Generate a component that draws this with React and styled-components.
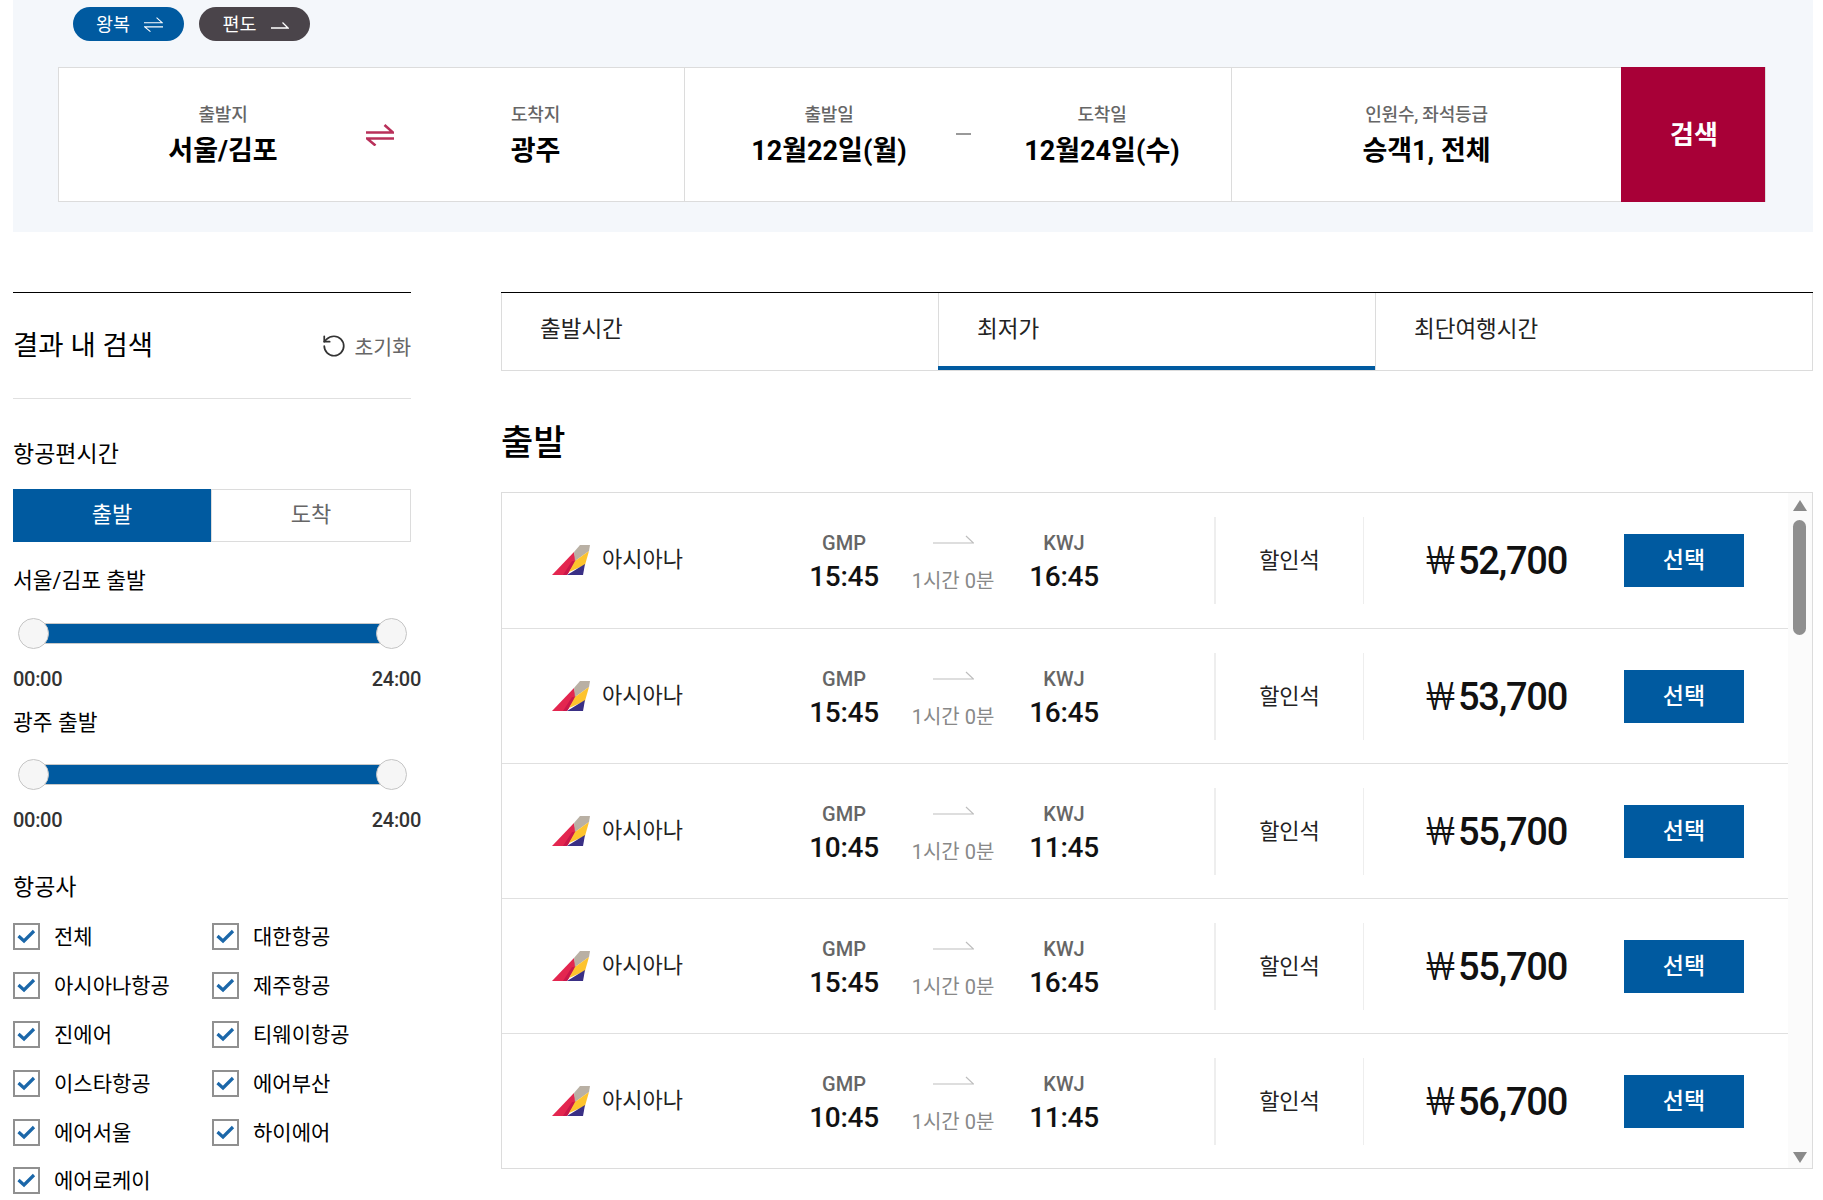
import React from "react";
import styled, { createGlobalStyle } from "styled-components";
import { RotateCcw } from "lucide-react";

const Global = createGlobalStyle`
  * { box-sizing: border-box; }
  html, body { margin: 0; padding: 0; background: #fff; }
  body { font-family: Roboto, "Noto Sans CJK KR", sans-serif; color: #000; overflow: hidden; }
`;

const BLUE = "#005aa0";

const Page = styled.div`
  width: 1823px;
  height: 1200px;
  padding: 0 10px 0 13px;
  overflow: hidden;
`;
const Hero = styled.section`
  height: 232px;
  background: #f4f7fb;
  padding: 7px 47px 0 45px;
`;
const Pills = styled.div`
  display: flex;
  gap: 15px;
  padding-left: 15px;
`;
const Pill = styled.button`
  width: 111px;
  height: 34px;
  border: 0;
  border-radius: 17px;
  background: ${(p) => (p.$dark ? "#4a444a" : BLUE)};
  color: #fff;
  font: 400 18.5px Roboto, "Noto Sans CJK KR", sans-serif;
  display: flex;
  align-items: center;
  justify-content: center;
  gap: 14px;
  padding: 0 0 2px 2px;
  & > svg { margin-top: 3px; }
`;
const SearchBox = styled.div`
  margin-top: 26px;
  height: 135px;
  display: flex;
  background: #fff;
  border: 1px solid #dcdcdc;
`;
const Group = styled.div`
  width: ${(p) => p.$w}px;
  flex: none;
  display: flex;
  align-items: center;
  border-right: ${(p) => (p.$last ? "0" : "1px solid #dcdcdc")};
`;
const Field = styled.div`
  width: ${(p) => p.$w}px;
  flex: none;
  text-align: center;
  padding-top: 3px;
`;
const FieldLabel = styled.div`
  font-size: 18px;
  font-weight: 500;
  color: #666;
  line-height: 24px;
  letter-spacing: -0.2px;
`;
const FieldValue = styled.div`
  font-size: 27px;
  font-weight: 700;
  line-height: 36px;
  margin-top: 6px;
  white-space: nowrap;
`;
const Floating = styled.div`
  width: 0;
  flex: none;
  display: flex;
  justify-content: center;
  transform: translateX(${(p) => p.$shift}px);
  & > * { flex: none; }
`;
const Dash = styled.div`
  width: 15px;
  height: 2px;
  background: #999;
  margin-top: -2px;
`;
const SearchButton = styled.button`
  width: 144px;
  flex: none;
  margin: -1px 0 -1px auto;
  border: 0;
  background: #a80037;
  color: #fff;
  font: 700 26px Roboto, "Noto Sans CJK KR", sans-serif;
  padding: 0 0 4px 2px;
`;
const Content = styled.div`
  display: flex;
  gap: 90px;
  margin-top: 60px;
`;
const Sidebar = styled.aside`
  width: 398px;
  flex: none;
  border-top: 1px solid #000;
`;
const SideHead = styled.div`
  height: 106px;
  display: flex;
  align-items: center;
  justify-content: space-between;
  border-bottom: 1px solid #e0e0e0;
  padding-top: 3px;
`;
const SideTitle = styled.h2`
  margin: -3px 0 0;
  font-size: 27.5px;
  font-weight: 400;
  line-height: 40px;
`;
const Reset = styled.div`
  display: flex;
  align-items: center;
  gap: 7px;
  font-size: 20.5px;
  color: #666;
  margin-top: -2px;
`;
const Section = styled.h3`
  margin: ${(p) => p.$mt}px 0 0;
  font-size: 23px;
  font-weight: 400;
  line-height: 32px;
`;
const Segment = styled.div`
  display: flex;
  margin-top: 18px;
  height: 53px;
`;
const SegItem = styled.div`
  flex: 1;
  display: flex;
  align-items: center;
  justify-content: center;
  font-size: 22px;
  padding-bottom: 7px;
  background: ${(p) => (p.$on ? BLUE : "#fff")};
  color: ${(p) => (p.$on ? "#fff" : "#666")};
  border: ${(p) => (p.$on ? "0" : "1px solid #dcdcdc")};
`;
const SubLabel = styled.div`
  font-size: 21.5px;
  line-height: 30px;
  margin-top: ${(p) => p.$mt}px;
`;
const Rail = styled.div`
  position: relative;
  height: 31px;
  width: 389px;
  margin: ${(p) => p.$mt}px 0 0 5px;
  display: flex;
  align-items: center;
  padding: 0 15px;
`;
const Fill = styled.div`
  flex: 1;
  height: 21px;
  background: ${BLUE};
  border-top: 1px solid #c8c8c8;
  border-bottom: 1px solid #c8c8c8;
`;
const Knob = styled.span`
  position: absolute;
  top: 0;
  ${(p) => (p.$end ? "right: 0;" : "left: 0;")}
  width: 31px;
  height: 31px;
  border-radius: 50%;
  background: #f6f6f6;
  border: 1px solid #c5c5c5;
`;
const Range = styled.div`
  display: flex;
  justify-content: space-between;
  width: 408px;
  margin-top: 16px;
  font-size: 20px;
  font-weight: 500;
  line-height: 28px;
  color: #333;
  letter-spacing: -0.3px;
`;
const Checks = styled.div`
  display: grid;
  grid-template-columns: 199px 199px;
  grid-auto-rows: 48.8px;
  margin-top: 19.4px;
`;
const Check = styled.label`
  display: flex;
  align-items: flex-start;
  gap: 14px;
  font-size: 21px;
  line-height: 28px;
  white-space: nowrap;
`;
const Box = styled.span`
  width: 27px;
  height: 27px;
  flex: none;
  border: 2px solid #909090;
  background: #fff;
  display: flex;
  align-items: center;
  justify-content: center;
`;
const Main = styled.main`
  flex: 1;
  min-width: 0;
  border-top: 1px solid #000;
`;
const Tabs = styled.div`
  display: flex;
  height: 78px;
  border: 1px solid #dcdcdc;
  border-top: 0;
`;
const Tab = styled.div`
  flex: 1;
  position: relative;
  padding: 20px 0 0 38px;
  font-size: 22.5px;
  line-height: 32px;
  color: #222;
  border-left: ${(p) => (p.$first ? "0" : "1px solid #dcdcdc")};
  ${(p) => p.$on && `&::after { content: ""; position: absolute; left: -1px; right: 0; bottom: 0; height: 4px; background: ${BLUE}; }`}
`;
const Heading = styled.h2`
  margin: 49px 0 0;
  font-size: 35px;
  font-weight: 500;
  line-height: 48px;
`;
const List = styled.div`
  position: relative;
  margin-top: 24px;
  height: 677px;
  border: 1px solid #dcdcdc;
  padding-right: 24px;
  overflow: hidden;
`;
const Row = styled.div`
  height: ${(p) => (p.$first ? 136 : 135)}px;
  padding-bottom: ${(p) => (p.$first ? 1 : 0)}px;
  display: grid;
  grid-template-columns: 218px 148px 70px 152px 74px 150px 260px 120px;
  align-items: center;
  padding-left: 50px;
  border-bottom: 1px solid ${(p) => (p.$last ? "transparent" : "#e0e0e0")};
`;
const Airline = styled.div`
  display: flex;
  align-items: center;
  gap: 12px;
  font-size: 22px;
  color: #222;
  & > span { padding-bottom: 7px; }
`;
const Endpoint = styled.div`
  text-align: center;
  padding-top: 3px;
`;
const Code = styled.div`
  font-size: 20px;
  font-weight: 500;
  line-height: 31px;
  color: #666;
`;
const Time = styled.div`
  font-size: 28px;
  font-weight: 500;
  line-height: 36px;
  color: #111;
  letter-spacing: -0.3px;
`;
const Duration = styled.div`
  display: flex;
  flex-direction: column;
  align-items: center;
  padding-top: 12px;
`;
const ArrowSlot = styled.div`
  height: 30px;
  display: flex;
  align-items: center;
  justify-content: center;
`;
const DurText = styled.div`
  font-size: 20px;
  line-height: 53px;
  color: #888;
  white-space: nowrap;
`;
const Fare = styled.div`
  grid-column: 6;
  height: 87px;
  display: flex;
  align-items: center;
  justify-content: center;
  font-size: 22px;
  color: #222;
  padding-bottom: 5px;
  border-left: 2px solid #eee;
  border-right: 1px solid #eee;
`;
const Price = styled.div`
  padding: 2px 0 0 62px;
  font-size: 38px;
  font-weight: 500;
  color: #111;
  letter-spacing: -1.2px;
  white-space: nowrap;
`;
const Won = styled.span`
  font-weight: 300;
  margin-right: 3px;
  letter-spacing: 0;
`;
const Select = styled.button`
  width: 120px;
  height: 53px;
  border: 0;
  background: ${BLUE};
  color: #fff;
  font: 500 23px Roboto, "Noto Sans CJK KR", sans-serif;
  padding: 0 0 4px;
`;
const Scroll = styled.div`
  position: absolute;
  top: 0;
  right: 0;
  bottom: 0;
  width: 24px;
  background: #fbfbfb;
`;
const Thumb = styled.div`
  position: absolute;
  top: 27px;
  left: 5px;
  width: 13px;
  height: 115px;
  border-radius: 7px;
  background: #8f8f8f;
`;
const Arrow = styled.div`
  position: absolute;
  left: 5px;
  ${(p) => (p.$down ? "bottom: 5px;" : "top: 7px;")}
  width: 0;
  height: 0;
  border-left: 7.5px solid transparent;
  border-right: 7.5px solid transparent;
  ${(p) => (p.$down ? "border-top: 11px solid #8a8a8a;" : "border-bottom: 11px solid #8a8a8a;")}
`;

const SwapIcon = ({ w = 28, h = 22, color = "#b9305a", sw = 2.6 }) => (
  <svg width={w} height={h} viewBox="0 0 28 22" fill="none" stroke={color} strokeWidth={sw}>
    <path d="M0 8.5H27L18.5 1" />
    <path d="M28 14.5H1L9.5 21.5" />
  </svg>
);
const OneWayIcon = () => (
  <svg width="18" height="10" viewBox="0 0 18 10" fill="none" stroke="#fff" strokeWidth="1.3">
    <path d="M0 8H17L11.5 2.5" />
  </svg>
);
const FlightArrow = () => (
  <svg width="41" height="10" viewBox="0 0 41 10" fill="none" stroke="#bdbdbd" strokeWidth="1.2">
    <path d="M0 8H40.5L33 1" />
  </svg>
);
const Tick = () => (
  <svg width="19" height="15" viewBox="0 0 19 15" fill="none" stroke="#1b67a9" strokeWidth="3.2">
    <path d="M1.5 7L7 12L17 2" />
  </svg>
);
const Logo = () => (
  <svg width="38" height="30" viewBox="0 0 38 30">
    <polygon points="0,30 22,7 24,16 15,30" fill="#e3264f" />
    <polygon points="11,30 20,16 24,16 15,30" fill="#c9174a" />
    <polygon points="22,7 28,0 38,0 37,6 23,16" fill="#b9b0a4" />
    <polygon points="23,16 37,6 33,20 17,27" fill="#fdc32d" />
    <polygon points="15,30 33,19 31,30" fill="#3a2f85" />
  </svg>
);

const airlines = ["전체", "대한항공", "아시아나항공", "제주항공", "진에어", "티웨이항공", "이스타항공", "에어부산", "에어서울", "하이에어", "에어로케이"];
const flights = [
  ["15:45", "16:45", "52,700"],
  ["15:45", "16:45", "53,700"],
  ["10:45", "11:45", "55,700"],
  ["15:45", "16:45", "55,700"],
  ["10:45", "11:45", "56,700"],
];

const Slider = ({ mt }) => (
  <>
    <Rail $mt={mt}>
      <Knob />
      <Fill />
      <Knob $end />
    </Rail>
    <Range>
      <span>00:00</span>
      <span>24:00</span>
    </Range>
  </>
);

export default function App() {
  return (
    <Page>
      <Global />
      <Hero>
        <Pills>
          <Pill>왕복 <SwapIcon w={19} h={15} color="#fff" sw={1.6} /></Pill>
          <Pill $dark>편도 <OneWayIcon /></Pill>
        </Pills>
        <SearchBox>
          <Group $w={626}>
            <Field $w={328}>
              <FieldLabel>출발지</FieldLabel>
              <FieldValue>서울/김포</FieldValue>
            </Field>
            <Floating $shift={-7}><SwapIcon /></Floating>
            <Field $w={297}>
              <FieldLabel>도착지</FieldLabel>
              <FieldValue>광주</FieldValue>
            </Field>
          </Group>
          <Group $w={547}>
            <Field $w={288}>
              <FieldLabel>출발일</FieldLabel>
              <FieldValue>12월22일(월)</FieldValue>
            </Field>
            <Floating $shift={-10}><Dash /></Floating>
            <Field $w={258}>
              <FieldLabel>도착일</FieldLabel>
              <FieldValue>12월24일(수)</FieldValue>
            </Field>
          </Group>
          <Group $w={389} $last>
            <Field $w={389}>
              <FieldLabel>인원수, 좌석등급</FieldLabel>
              <FieldValue>승객1, 전체</FieldValue>
            </Field>
          </Group>
          <SearchButton>검색</SearchButton>
        </SearchBox>
      </Hero>
      <Content>
        <Sidebar>
          <SideHead>
            <SideTitle>결과 내 검색</SideTitle>
            <Reset><RotateCcw size={26} strokeWidth={1.6} color="#333" />초기화</Reset>
          </SideHead>
          <Section $mt={40}>항공편시간</Section>
          <Segment>
            <SegItem $on>출발</SegItem>
            <SegItem>도착</SegItem>
          </Segment>
          <SubLabel $mt={24}>서울/김포 출발</SubLabel>
          <Slider mt={22} />
          <SubLabel $mt={15}>광주 출발</SubLabel>
          <Slider mt={21} />
          <Section $mt={38}>항공사</Section>
          <Checks>
            {airlines.map((a) => (
              <Check key={a}>
                <Box><Tick /></Box>
                {a}
              </Check>
            ))}
          </Checks>
        </Sidebar>
        <Main>
          <Tabs>
            <Tab $first>출발시간</Tab>
            <Tab $on>최저가</Tab>
            <Tab>최단여행시간</Tab>
          </Tabs>
          <Heading>출발</Heading>
          <List>
            {flights.map(([dep, arr, price], i) => (
              <Row key={i} $first={i === 0} $last={i === flights.length - 1}>
                <Airline><Logo /><span>아시아나</span></Airline>
                <Endpoint><Code>GMP</Code><Time>{dep}</Time></Endpoint>
                <Duration>
                  <ArrowSlot><FlightArrow /></ArrowSlot>
                  <DurText>1시간 0분</DurText>
                </Duration>
                <Endpoint><Code>KWJ</Code><Time>{arr}</Time></Endpoint>
                <Fare>할인석</Fare>
                <Price><Won>₩</Won>{price}</Price>
                <Select>선택</Select>
              </Row>
            ))}
            <Scroll>
              <Arrow />
              <Thumb />
              <Arrow $down />
            </Scroll>
          </List>
        </Main>
      </Content>
    </Page>
  );
}
